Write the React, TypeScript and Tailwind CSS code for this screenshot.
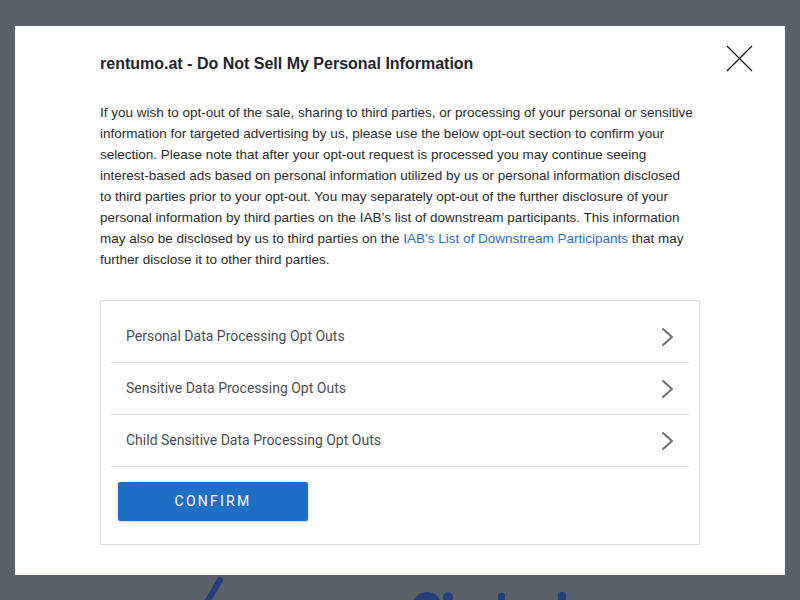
import React from "react";

const items = [
  "Personal Data Processing Opt Outs",
  "Sensitive Data Processing Opt Outs",
  "Child Sensitive Data Processing Opt Outs",
];

function Chevron() {
  return (
    <svg width="14" height="20" viewBox="0 0 14 20" fill="none">
      <path d="M2 2 L11 10 L2 18" stroke="#6b6e73" strokeWidth="2" strokeLinecap="round" strokeLinejoin="round" />
    </svg>
  );
}

export default function App() {
  return (
    <div className="relative h-[600px] w-[800px] overflow-hidden bg-[#5a616b]">
      {/* page content behind the overlay */}
      <div className="pt-[575px]">
        <svg width="800" height="25" viewBox="0 575 800 25">
          <line x1="220" y1="580" x2="206" y2="604" stroke="#243f78" strokeWidth="6" strokeLinecap="round" />
          <circle cx="427" cy="607" r="15" fill="#243f78" />
          <circle cx="448" cy="597" r="5" fill="#243f78" />
          <rect x="498" y="593" width="7" height="12" rx="2" fill="#243f78" />
          <rect x="558" y="592" width="8" height="12" rx="2" fill="#243f78" />
        </svg>
      </div>

      {/* modal */}
      <div className="absolute left-[15px] top-[26px] h-[549px] w-[770px] bg-white px-[85px] pt-[28px]">
        <button className="absolute left-[709px] top-[17px]" aria-label="Close">
          <svg width="32" height="32" viewBox="0 0 32 32">
            <line x1="3" y1="3" x2="28" y2="28" stroke="#111" strokeWidth="1.3" />
            <line x1="28" y1="3" x2="3" y2="28" stroke="#111" strokeWidth="1.3" />
          </svg>
        </button>
        <h1 className="text-[16px] font-bold leading-[19px] text-[#1f2330] font-['Liberation_Sans',Arial,sans-serif]">
          rentumo.at - Do Not Sell My Personal Information
        </h1>
        <p className="mt-[29px] whitespace-nowrap text-[13.5px] leading-[21px] text-[#2b2b2b] font-['Liberation_Sans',Arial,sans-serif]">
          If you wish to opt-out of the sale, sharing to third parties, or processing of your personal or sensitive
          <br />
          information for targeted advertising by us, please use the below opt-out section to confirm your
          <br />
          selection. Please note that after your opt-out request is processed you may continue seeing
          <br />
          interest-based ads based on personal information utilized by us or personal information disclosed
          <br />
          to third parties prior to your opt-out. You may separately opt-out of the further disclosure of your
          <br />
          personal information by third parties on the IAB’s list of downstream participants. This information
          <br />
          may also be disclosed by us to third parties on the{" "}
          <a className="text-[#2a6dcc]">IAB’s List of Downstream Participants</a> that may
          <br />
          further disclose it to other third parties.
        </p>
        <div className="mt-[30px] h-[245px] border border-[#dcdcdc] px-[10px] pt-[10px] font-['Roboto',sans-serif]">
          {items.map((t) => (
            <div key={t} className="flex h-[52px] items-center justify-between border-b border-[#dcdcdc] pl-[15px] pr-[14px]">
              <span className="text-[14px] text-[#4a4d52]">{t}</span>
              <Chevron />
            </div>
          ))}
          <button className="ml-[7px] mt-[15px] flex h-[39px] w-[190px] items-center justify-center rounded-[2px] bg-[#1f6ec5] text-[14px] tracking-[0.16em] text-white shadow-[0_1px_3px_rgba(0,0,0,0.2)]">
            CONFIRM
          </button>
        </div>
      </div>
    </div>
  );
}
